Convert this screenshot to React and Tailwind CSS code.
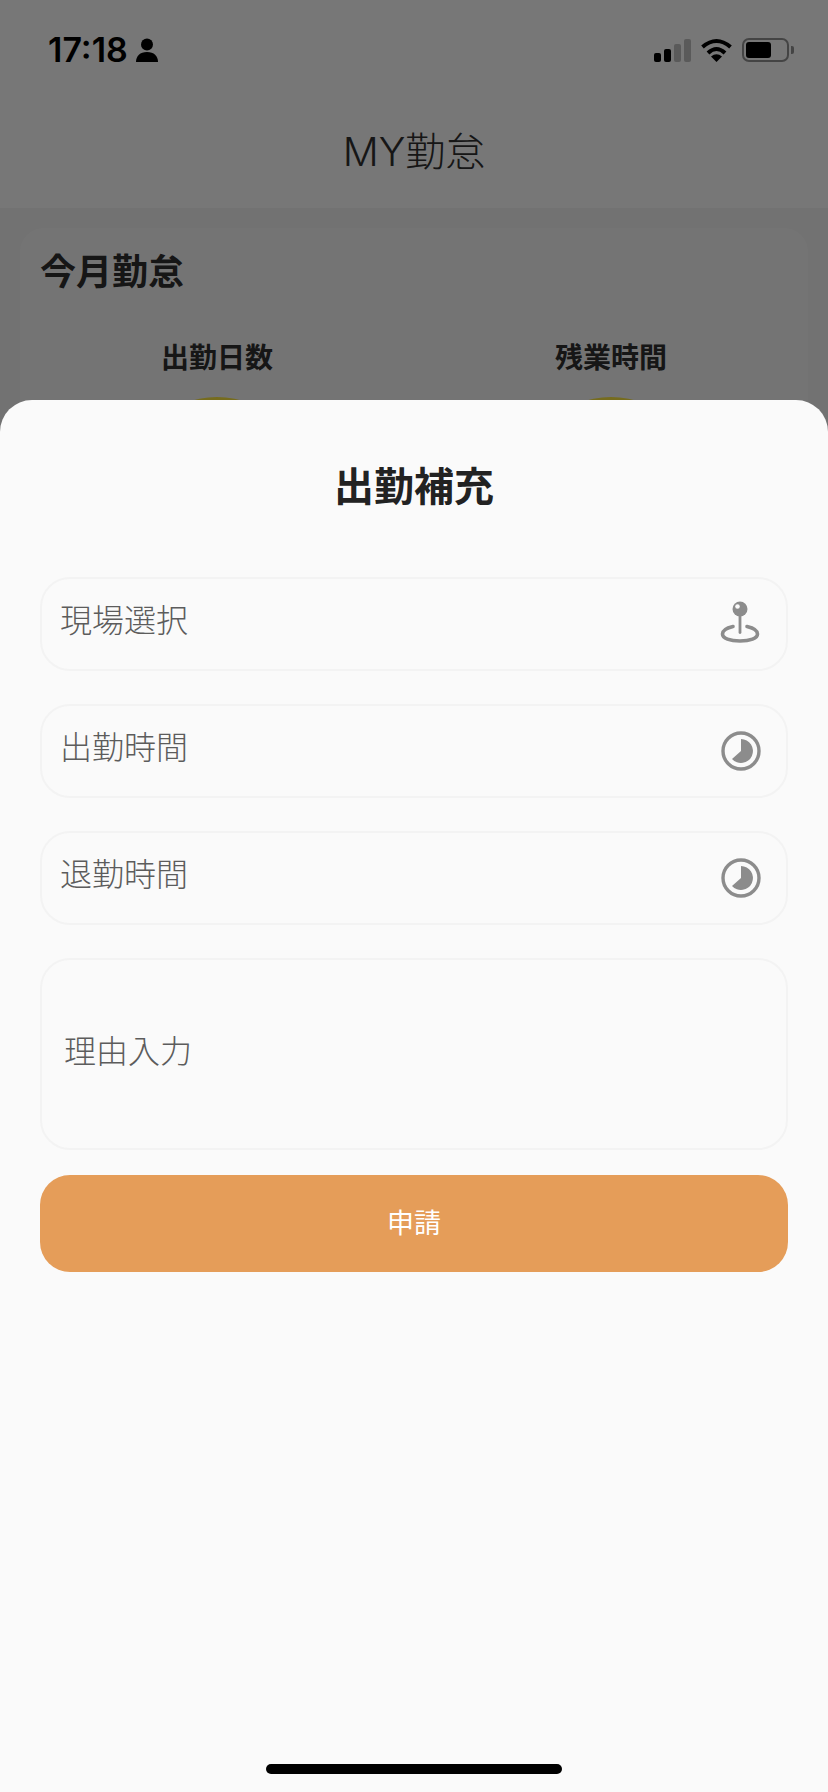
import React from 'react';

const FONT = 'Inter, "Noto Sans CJK JP", "Noto Sans", sans-serif';

const PinIcon = () => (
  <svg className="-mt-[5px]" width="40" height="42" viewBox="0 0 40 42" fill="none">
    <path d="M13 25.500C6.500 27 2.500 29.500 2.500 33c0 4.400 7.500 7 17.500 7s17.500-2.600 17.500-7c0-3.500-4-6-10.500-7.500" stroke="#8c8c8c" strokeWidth="3.600" strokeLinecap="round" />
    <rect x="18.600" y="12" width="2.800" height="21" rx="1.400" fill="#8c8c8c" />
    <circle cx="20" cy="8" r="7.500" fill="#8c8c8c" />
    <circle cx="17.500" cy="5.500" r="2.300" fill="#fafafa" />
  </svg>
);

const ClockIcon = () => (
  <svg className="mr-[-1px]" width="40" height="40" viewBox="0 0 40 40" fill="none">
    <circle cx="20" cy="20" r="18" stroke="#8c8c8c" strokeWidth="3.400" />
    <path d="M20 8A12 12 0 1 1 11 28l9-8z" fill="#8c8c8c" />
  </svg>
);

const StatusBar = () => (
  <div className="flex h-[100px] items-center justify-between pl-[48px] pr-[34px]">
    <div className="flex items-center gap-[8px]">
      <span className="text-[34px] leading-none font-semibold text-black">17:18</span>
      <svg width="22" height="24" viewBox="0 0 22 24" fill="#000">
        <circle cx="11" cy="6.500" r="6" />
        <path d="M0 24c0-6 4-10 11-10s11 4 11 10z" />
      </svg>
    </div>
    <div className="flex items-center">
      <div className="flex items-end gap-[3px]">
        <div className="h-[9px] w-[7px] rounded-[2px] bg-black" />
        <div className="h-[13px] w-[7px] rounded-[2px] bg-black" />
        <div className="h-[18px] w-[7px] rounded-[2px] bg-[#b4b4b4]" />
        <div className="h-[23px] w-[7px] rounded-[2px] bg-[#b4b4b4]" />
      </div>
      <svg className="ml-[10px]" width="31" height="24" viewBox="0 0 31 24" fill="none" stroke="#000" strokeWidth="4">
        <path d="M1.500 9Q15.500 -3 29.500 9" />
        <path d="M7 15Q15.500 7 24 15" />
        <path d="M15.500 24L10 18.500Q15.500 14 21 18.500z" fill="#000" stroke="none" />
      </svg>
      <div className="ml-[10px] flex items-center">
        <div className="flex h-[24px] w-[47px] items-center rounded-[7px] border-2 border-[#888888] pl-[2px]">
          <div className="h-[16px] w-[25px] rounded-[3px] bg-black" />
        </div>
        <div className="ml-[2px] h-[8px] w-[3px] rounded-r-[2px] bg-[#888888]" />
      </div>
    </div>
  </div>
);

const SelectField = ({ label, icon }) => (
  <div className="flex h-[94px] items-center justify-between rounded-[30px] border-2 border-[#f3f3f3] pl-[18px] pr-[26px]">
    <span className="-mt-[6px] text-[32px] leading-none font-light text-[#5c5c5c]">{label}</span>
    {icon}
  </div>
);

export default function App() {
  return (
    <div className="relative h-[1792px] overflow-hidden bg-[#e4e4e4]" style={{ fontFamily: FONT }}>
      {/* page behind the sheet */}
      <div className="bg-[#eeeeee]">
        <StatusBar />
        <div className="flex h-[108px] items-center justify-center pb-[4px] text-[40px] leading-none font-light text-[#2c2c2c]">MY勤怠</div>
      </div>
      <div className="mx-[20px] mt-[20px] h-[400px] rounded-[24px] bg-[#e9e9e9] pt-[23px] text-[#2c2c2c]">
        <h2 className="pl-[20px] text-[36px] leading-[42px] font-bold">今月勤怠</h2>
        <div className="mt-[47px] grid grid-cols-2">
          <div className="flex flex-col items-center">
            <span className="text-[28px] leading-[36px] font-semibold">出勤日数</span>
            <div className="mt-[21px] h-[180px] w-[180px] rounded-full bg-[#ecd83c]" />
          </div>
          <div className="flex flex-col items-center">
            <span className="text-[28px] leading-[36px] font-semibold">残業時間</span>
            <div className="mt-[21px] h-[180px] w-[180px] rounded-full bg-[#ecd83c]" />
          </div>
        </div>
      </div>

      {/* dim layer */}
      <div className="absolute inset-0 bg-black/50" />

      {/* bottom sheet */}
      <div className="absolute inset-x-0 bottom-0 h-[1392px] rounded-t-[32px] bg-[#fafafa] px-[40px]">
        <h1 className="flex h-[177px] items-center justify-center pb-[4px] text-[40px] leading-none font-bold text-[#222222]">出勤補充</h1>
        <div className="flex flex-col gap-[33px]">
          <SelectField label="現場選択" icon={<PinIcon />} />
          <SelectField label="出勤時間" icon={<ClockIcon />} />
          <SelectField label="退勤時間" icon={<ClockIcon />} />
        </div>
        <div className="mt-[33px] flex h-[192px] items-center rounded-[30px] border-2 border-[#f3f3f3] pl-[22px]">
          <span className="-mt-[4px] text-[32px] leading-none font-light text-[#5c5c5c]">理由入力</span>
        </div>
        <button className="mt-[25px] flex h-[97px] w-full items-center justify-center rounded-[30px] bg-[#e59d59] text-[27px] leading-none text-white">申請</button>
      </div>

      {/* home indicator */}
      <div className="absolute bottom-[18px] left-[266px] h-[10px] w-[296px] rounded-full bg-black" />
    </div>
  );
}
